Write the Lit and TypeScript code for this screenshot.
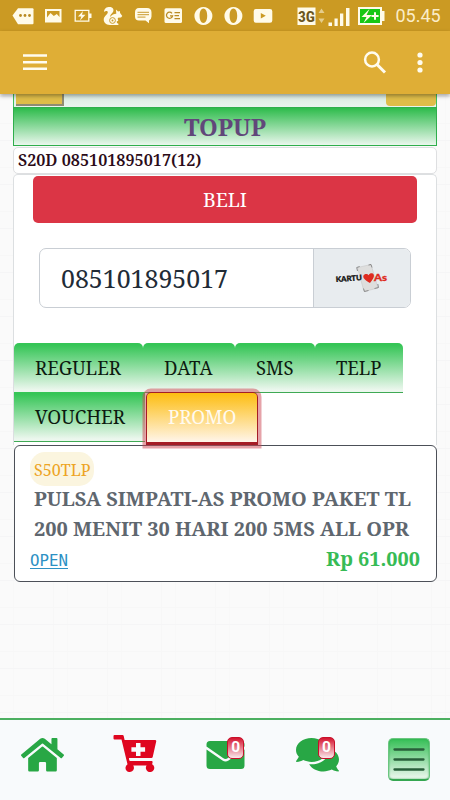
import { LitElement, html, svg, css } from "lit";
import { customElement, property } from "lit/decorators.js";

/** One line of text set to a fixed measure, so that serif fallbacks keep the same widths. */
@customElement("fit-text")
class FitText extends LitElement {
  @property() text = "";
  @property({ type: Number }) w = 100;
  @property({ type: Number }) h = 20;
  @property({ type: Number }) base = 16;
  static styles = css`
    :host { display: block; flex: none; }
    svg { display: block; overflow: visible; fill: currentColor; }
  `;
  render() {
    return html`<svg width=${this.w} height=${this.h}>
      <text x="0" y=${this.base} textLength=${this.w} lengthAdjust="spacingAndGlyphs">${this.text}</text>
    </svg>`;
  }
}

const fit = (text: string, w: number, h: number, base: number) =>
  html`<fit-text .text=${text} .w=${w} .h=${h} .base=${base}></fit-text>`;

const statusIcons = [
  // message tag
  svg`<path d="M4.500 15.500l5.500-7.300h14.500q1 0 1 1v14q0 1-1 1H10z"/><g fill="#b98a22"><circle cx="12.500" cy="15.500" r="1.400"/><circle cx="17" cy="15.500" r="1.400"/><circle cx="21.500" cy="15.500" r="1.400"/></g>`,
  // picture
  svg`<path fill-rule="evenodd" d="M7 9h16.500v13.500H7zM9 17.500l3.500-4.500 3.300 3 3-2 2.700 3v-6H9z"/>`,
  // charging battery
  svg`<path fill="none" stroke="#fffbe9" stroke-width="1.300" d="M7.200 10.400h13.600v10.800H7.200z"/><path d="M21 13.500h2.500v4.500H21zM15 11l-5 5.500h3.300L12 20.500l5.500-5.700H14z"/>`,
  // squirrel
  svg`<path d="M10.500 7c4.500-.5 6 2.500 4.300 5.300-1.300 2-3 2.700-2.500 4.700 1.500-2.500 3.700-3.200 6-3.300l-.4-4.200 2.200 2 1.700-.6.3 2.200 2.200 2.800-1.300 1.600-3 .3-.3 1.200.6 1.700-1.600.7.3 1.700 1.400.6v1.200H12c-4.500 0-6.700-3-6.200-6.200.4-2.700 4-4.200 4-6.500 0-1.400-2.300-1.500-3.700-.2C5.800 9.300 7.500 7.400 10.500 7z"/><circle cx="14.500" cy="20.500" r="2.900" fill="none" stroke="#c99b2d"/><circle cx="14.500" cy="20.500" r="1" fill="#c99b2d"/>`,
  // chat bubble
  svg`<path d="M11 8h8q4.500 0 4.500 4.500v4q0 3-2.500 4v2.700l-3.500-2.700H11q-4 0-4-4v-4Q7 8 11 8z"/><path d="M9.500 12.300h11.500M9.500 14.700h11.500M9.500 17.100h8" fill="none" stroke="#c99b2d" stroke-width="1"/>`,
  // news card
  svg`<rect x="6.500" y="8.200" width="17.500" height="14.800" rx="1.500"/><path d="M14 13.300a3.100 3.100 0 1 0 .6 2.600H12M16.500 12.700H22M16.500 15.700h4.500M16.500 18.700H22" fill="none" stroke="#ba8c24" stroke-width="1.300"/>`,
  // opera
  svg`<path fill-rule="evenodd" d="M15.400 7a9 9 0 1 0 .01 0zM15.400 8.500c2.300 0 3.800 3 3.800 7.200s-1.500 7.200-3.800 7.200-3.800-3-3.800-7.200 1.500-7.200 3.800-7.200z"/>`,
  svg`<path fill-rule="evenodd" d="M15.400 7a9 9 0 1 0 .01 0zM15.400 8.500c2.300 0 3.800 3 3.800 7.200s-1.500 7.200-3.800 7.200-3.800-3-3.800-7.200 1.500-7.200 3.800-7.200z"/>`,
  // video
  svg`<path fill-rule="evenodd" d="M8 9h14q2.300 0 2.300 2.300v9.200q0 2.300-2.300 2.300H8q-2.300 0-2.300-2.300v-9.200Q5.700 9 8 9zM12.800 13v5.500l5-2.750z"/>`,
];

const homePath = "M280.37 148.26L96 300.11V464a16 16 0 0 0 16 16l112.06-.29a16 16 0 0 0 15.92-16V368a16 16 0 0 1 16-16h64a16 16 0 0 1 16 16v95.64a16 16 0 0 0 16 16.05L464 480a16 16 0 0 0 16-16V300L295.67 148.26a12.19 12.19 0 0 0-15.3 0zM571.6 251.47L488 182.56V44.05a12 12 0 0 0-12-12h-56a12 12 0 0 0-12 12v72.61L318.47 43a48 48 0 0 0-61 0L4.34 251.47a12 12 0 0 0-1.6 16.9l25.5 31A12 12 0 0 0 45.15 301l235.22-193.74a12.19 12.19 0 0 1 15.3 0L530.9 301a12 12 0 0 0 16.9-1.6l25.5-31a12 12 0 0 0-1.7-16.93z";
const chatPath = "M416 192c0-88.4-93.1-160-208-160S0 103.6 0 192c0 34.3 14.1 65.900 38 92-13.400 30.200-35.500 54.200-35.800 54.500-2.200 2.300-2.800 5.700-1.500 8.700S4.800 352 8 352c36.600 0 66.900-12.300 88.700-25 32.200 15.700 70.300 25 111.300 25 114.900 0 208-71.600 208-160zm122 220c23.900-26 38-57.700 38-92 0-66.900-53.500-124.200-129.300-148.100.9 6.600 1.300 13.300 1.300 20.100 0 105.900-107.700 192-240 192-10.800 0-21.300-.8-31.700-1.900C207.800 439.600 281.800 480 368 480c41 0 79.100-9.200 111.300-25 21.800 12.700 52.100 25 88.700 25 3.200 0 6.100-1.900 7.300-4.800 1.300-2.900.7-6.300-1.500-8.700-.3-.2-22.400-24.200-35.800-54.500z";

const tabs = [
  { text: "REGULER", w: 129, tw: 86 },
  { text: "DATA", w: 91.500, tw: 48.500 },
  { text: "SMS", w: 80.500, tw: 37.500 },
  { text: "TELP", w: 88, tw: 45.500 },
];

@customElement("app-root")
class AppRoot extends LitElement {
  static styles = css`
    :host {
      display: flex; flex-direction: column; width: 450px; height: 800px; overflow: hidden;
      font-family: "Noto Serif", "DejaVu Serif Condensed", "DejaVu Serif", serif;
      font-stretch: condensed;
      background-color: #fafafa;
      background-image:
        repeating-linear-gradient(0deg, transparent 0 16px, #f7f7f7 16px 17px, transparent 17px 43px, #f5f5f6 43px 44px),
        repeating-linear-gradient(90deg, transparent 0 13px, #f8f8f8 13px 14px, transparent 14px 53px, #f7f7f7 53px 54px);
    }
    * { box-sizing: border-box; }
    svg { display: block; flex: none; }
    .status { flex: none; height: 31px; background: #cb9a23; display: flex; padding-left: 7.5px; }
    .status svg { fill: #fffbe9; }
    .right { margin-left: 17px; }
    .clock { font: 18px/32px Roboto, sans-serif; color: #fbedc9; margin-left: 8px; width: 46px; }
    .bar { flex: none; height: 63px; background: #dfae36; position: relative; box-shadow: 0 2px 4px rgba(0,0,0,.35); }
    .page { flex: 1; min-height: 0; padding: 0 13px; }
    .strip { height: 13px; display: flex; justify-content: space-between; border: solid #3fbd5c; border-width: 0 1px; padding: 0 0 0 2px;
      background: linear-gradient(#d9ebe0, #e9f4ee); }
    .chip { height: 12px; background: #dfbd49; border: solid #8f8c72; border-width: 0 2px 2px 0; width: 47.500px; }
    .chip2 { height: 12px; width: 50px; background: #dfbd49; border-radius: 0 0 4px 4px; }
    .title { height: 39px; border: 1px solid #2fae4c; background: linear-gradient(#2dbb4b, #eaf7ed); display: flex; justify-content: center; color: #61477a; font-size: 23px; font-weight: 700; }
    .info { height: 27px; margin-top: 1px; background: #fff; border: 1px solid #dedfe1; border-radius: 5px; padding-left: 4px; color: #2b0b18; font-weight: 600; font-size: 16.600px; }
    .form { height: 271px; background: #fff; border: 1px solid #dcdfe1; border-bottom: 0; border-radius: 5px 5px 0 0; }
    .buy { margin: 1px 19px 0; height: 47px; border-radius: 5px; background: #db3545; color: #fff; font-size: 20px; display: flex; justify-content: center; }
    .field { margin: 25px 25px 0; height: 60px; width: 372px; border: 1px solid #c9ced4; border-radius: 7px; display: flex; overflow: hidden; }
    .num { flex: 1; padding-left: 20.500px; font-size: 25.600px; color: #212b36; }
    .op { width: 97.500px; background: #e8ecef; border-left: 1px solid #c9ced4; display: flex; align-items: center; justify-content: center; }
    .tabs { display: flex; margin-top: 35px; }
    .tab { height: 50px; border-radius: 5px 5px 0 0; border-bottom: 1.500px solid #3fa955; background: linear-gradient(#35c556 4%, #ecf7ee 96%); display: flex; padding-left: 21px; font-size: 19.600px; color: #0d1a10; }
    .second { margin-top: -1px; position: relative; }
    .voucher { width: 131px; border-radius: 0; }
    .promo { width: 112px; height: 53px; margin-left: 1px; border: 1.500px solid #a51d26; border-bottom-width: 3px; background: linear-gradient(#fdbd10, #fff5ea); color: #fffaf0; box-shadow: 0 0 0 3.500px rgba(205,72,84,.5); padding-left: 20.500px; }
    .card { margin: 0 0 0 1px; height: 137px; border: 1.300px solid #4c5058; border-radius: 6px; background: #fff; padding: 6px 15px 0; color: #5f676f; font-size: 20px; font-weight: 700; }
    .code { width: 64px; height: 34px; border-radius: 15px; background: #fbf5df; color: #eda424; font-size: 16.800px; font-weight: normal; padding-left: 4px; }
    .line { padding-left: 3.500px; height: 30px; }
    .foot { display: flex; justify-content: space-between; height: 30px; color: #37bb55; padding-right: 1px; }
    .open { color: #2d91c4; font-family: "DejaVu Sans Mono", monospace; font-weight: normal; font-size: 15.600px; height: 23px; border-bottom: 1.300px solid #2d91c4; }
    .nav { flex: none; height: 82px; border-top: 2px solid #4caf60; background: #f8fafc; display: flex; justify-content: space-between; padding: 14px 20px 0 20.500px; }
    .item { position: relative; height: 48px; display: flex; }
    .mail { left: -1px; }
    .chat { left: 1px; }
    .count { position: absolute; width: 17px; height: 22px; border-radius: 5px; border: 1.300px solid #c8102a; background: linear-gradient(#d51530, #fae9ec); color: #fff; font: bold 15.500px/19px Roboto, sans-serif; text-align: center; top: 3px; left: 21.500px; }
    .list { width: 42px; height: 43px; margin-top: 3.500px; border-radius: 5px; background: linear-gradient(#35bf56, #eef8f0); border: 1px solid #6bc680; border-bottom: 2px solid #35a651; box-shadow: inset 0 0 2px #35a651; }
  `;

  render() {
    return html`
      <div class="status">
        ${statusIcons.map((i) => html`<svg width="30" height="31">${i}</svg>`)}
        <svg class="right" width="93" height="31">
          <rect x="2.500" y="7.500" width="18" height="17.500"/>
          <text x="3" y="21.500" font-family="Roboto, sans-serif" font-size="14.500" font-weight="bold" fill="#6b5620" textLength="17" lengthAdjust="spacingAndGlyphs">3G</text>
          <path fill="#e5cd8c" d="M23.500 13l3-4.500 3 4.500zM23.500 18.500h6l-3 4.500z"/>
          <path d="M33.500 22.500h3.500v3.500h-3.500zM39.500 18.500h3.200V26h-3.200zM45 13.500h3.300V26H45zM51 8h3.500v18H51z"/>
          <path d="M63 7h24v4h2.500v10H87v4H63z"/><path fill="#17c714" d="M65 9h20v14H65z"/>
          <path d="M74.500 9l-8 8h5l-3 6 8.500-8h-5.500zM79 12.300h2v2.700h2.600v2H81v2.700h-2V17h-2.500v-2H79z"/>
        </svg>
        <div class="clock">05.45</div>
      </div>
      <div class="bar">
        <svg width="450" height="63" fill="#fffcef">
          <path d="M23 23.200h24v2.600H23zM23 29.900h24v2.600H23zM23 36.500h24v2.600H23z"/>
          <circle cx="372" cy="28.500" r="6.900" fill="none" stroke="#fffcef" stroke-width="2.500"/>
          <path d="M377 33.500l8 8" stroke="#fffcef" stroke-width="3"/>
          <circle cx="420" cy="24" r="2.600"/><circle cx="420" cy="31.500" r="2.600"/><circle cx="420" cy="39" r="2.600"/>
        </svg>
      </div>
      <div class="page">
        <div class="strip"><div class="chip"></div><div class="chip2"></div></div>
        <div class="title">${fit("TOPUP", 82, 36, 28)}</div>
        <div class="info">${fit("S20D 085101895017(12)", 183.500, 25, 17.500)}</div>
        <div class="form">
          <div class="buy">${fit("BELI", 44, 47, 30.500)}</div>
          <div class="field">
            <div class="num">${fit("085101895017", 167, 58, 38.500)}</div>
            <div class="op">
              <svg width="56" height="32" viewBox="0 0 56 32">
                <path fill="#dededd" stroke="#c8c8c8" stroke-width=".6" d="M23.500 5.500l13.500-3 7 23.500-14 3.500z"/>
                <path fill="none" stroke="#777" stroke-width=".8" d="M23.500 9l-.8-3.500 3-1M34.500 3l2.500-.5 1 3M29.500 26.500l1 3 4-1M40.500 26.500l4-1-.7-3.500"/>
                <text x="2" y="20" font-family="Lato, sans-serif" font-weight="900" font-size="7.500" fill="#111" stroke="#111" stroke-width=".3" textLength="26" lengthAdjust="spacingAndGlyphs" transform="rotate(-4 2 20)">KARTU</text>
                <path fill="#de2b20" d="M36 21c-5-3-7.500-5-6.500-7.500 1-2 4-2 5.200-.3 1-2.300 4-2.600 5-.6 1 2.400-1.200 5.400-3.700 8.400z"/>
                <text x="40" y="18.500" font-family="Lato, sans-serif" font-weight="900" font-size="9" fill="#de2b20" stroke="#de2b20" stroke-width=".3" textLength="13" lengthAdjust="spacingAndGlyphs">As</text>
              </svg>
            </div>
          </div>
          <div class="tabs">
            ${tabs.map((t) => html`<div class="tab" style="width:${t.w}px">${fit(t.text, t.tw, 48, 32)}</div>`)}
          </div>
          <div class="tabs second">
            <div class="tab voucher">${fit("VOUCHER", 90, 48, 32)}</div>
            <div class="tab promo">${fit("PROMO", 68.500, 48, 31)}</div>
          </div>
        </div>
        <div class="card">
          <div class="code">${fit("S50TLP", 56.500, 34, 24)}</div>
          <div class="line">${fit("PULSA SIMPATI-AS PROMO PAKET TL", 377, 30, 20)}</div>
          <div class="line">${fit("200 MENIT 30 HARI 200 5MS ALL OPR", 375, 30, 20)}</div>
          <div class="foot">
            <div class="open">${fit("OPEN", 38, 20, 19.500)}</div>
            ${fit("Rp 61.000", 94, 30, 20)}
          </div>
        </div>
      </div>
      <div class="nav">
        <div class="item"><svg width="43" height="40" viewBox="0 -20 576 532" fill="#28a745"><path d=${homePath}/></svg></div>
        <div class="item"><svg width="44" height="44" viewBox="0 0 44 44" fill="#df0620">
          <path fill-rule="evenodd" d="M1.500 1h8q1 0 1.200 1l.9 4H42q1.500 0 1.200 1.500l-3.500 15.500q-.3 1-1.300 1H16l.6 3h22q1.200 0 1 1.200l-.5 2a4.200 4.200 0 1 1-5.500 1.300H20.200a4.200 4.200 0 1 1-5.700-1.200L8.500 5.500h-7Q.5 5.500.5 4.500V2q0-1 1-1z"/>
          <path fill="#f8fafc" d="M23 9h4.500v4.200h4.600v4.500h-4.600V22H23v-4.300h-4.600v-4.500H23zM16 24h24.500v2H16.500z"/>
        </svg></div>
        <div class="item mail"><svg width="39" height="38" viewBox="0 0 39 38" fill="#28a745">
          <path d="M4 7h31q3.500 0 3.500 3.500v2L22 24q-2.500 1.800-5 0L.5 12.500v-2Q.5 7 4 7z"/>
          <path d="M.5 15.500L16.500 26.500q3 2 6 0l16-11V31.500q0 3.500-3.500 3.500H4Q.5 35 .5 31.500z"/>
        </svg><div class="count">0</div></div>
        <div class="item chat"><svg width="43" height="40" viewBox="0 -20 576 532" fill="#28a745"><path d=${chatPath}/></svg><div class="count">0</div></div>
        <div class="item"><div class="list"><svg width="40" height="40"><path d="M5.500 10.500h29M5.500 20.500h29M5.500 30.500h29" stroke="#285f3a" stroke-width="2.300" stroke-linecap="round"/></svg></div></div>
      </div>
    `;
  }
}
